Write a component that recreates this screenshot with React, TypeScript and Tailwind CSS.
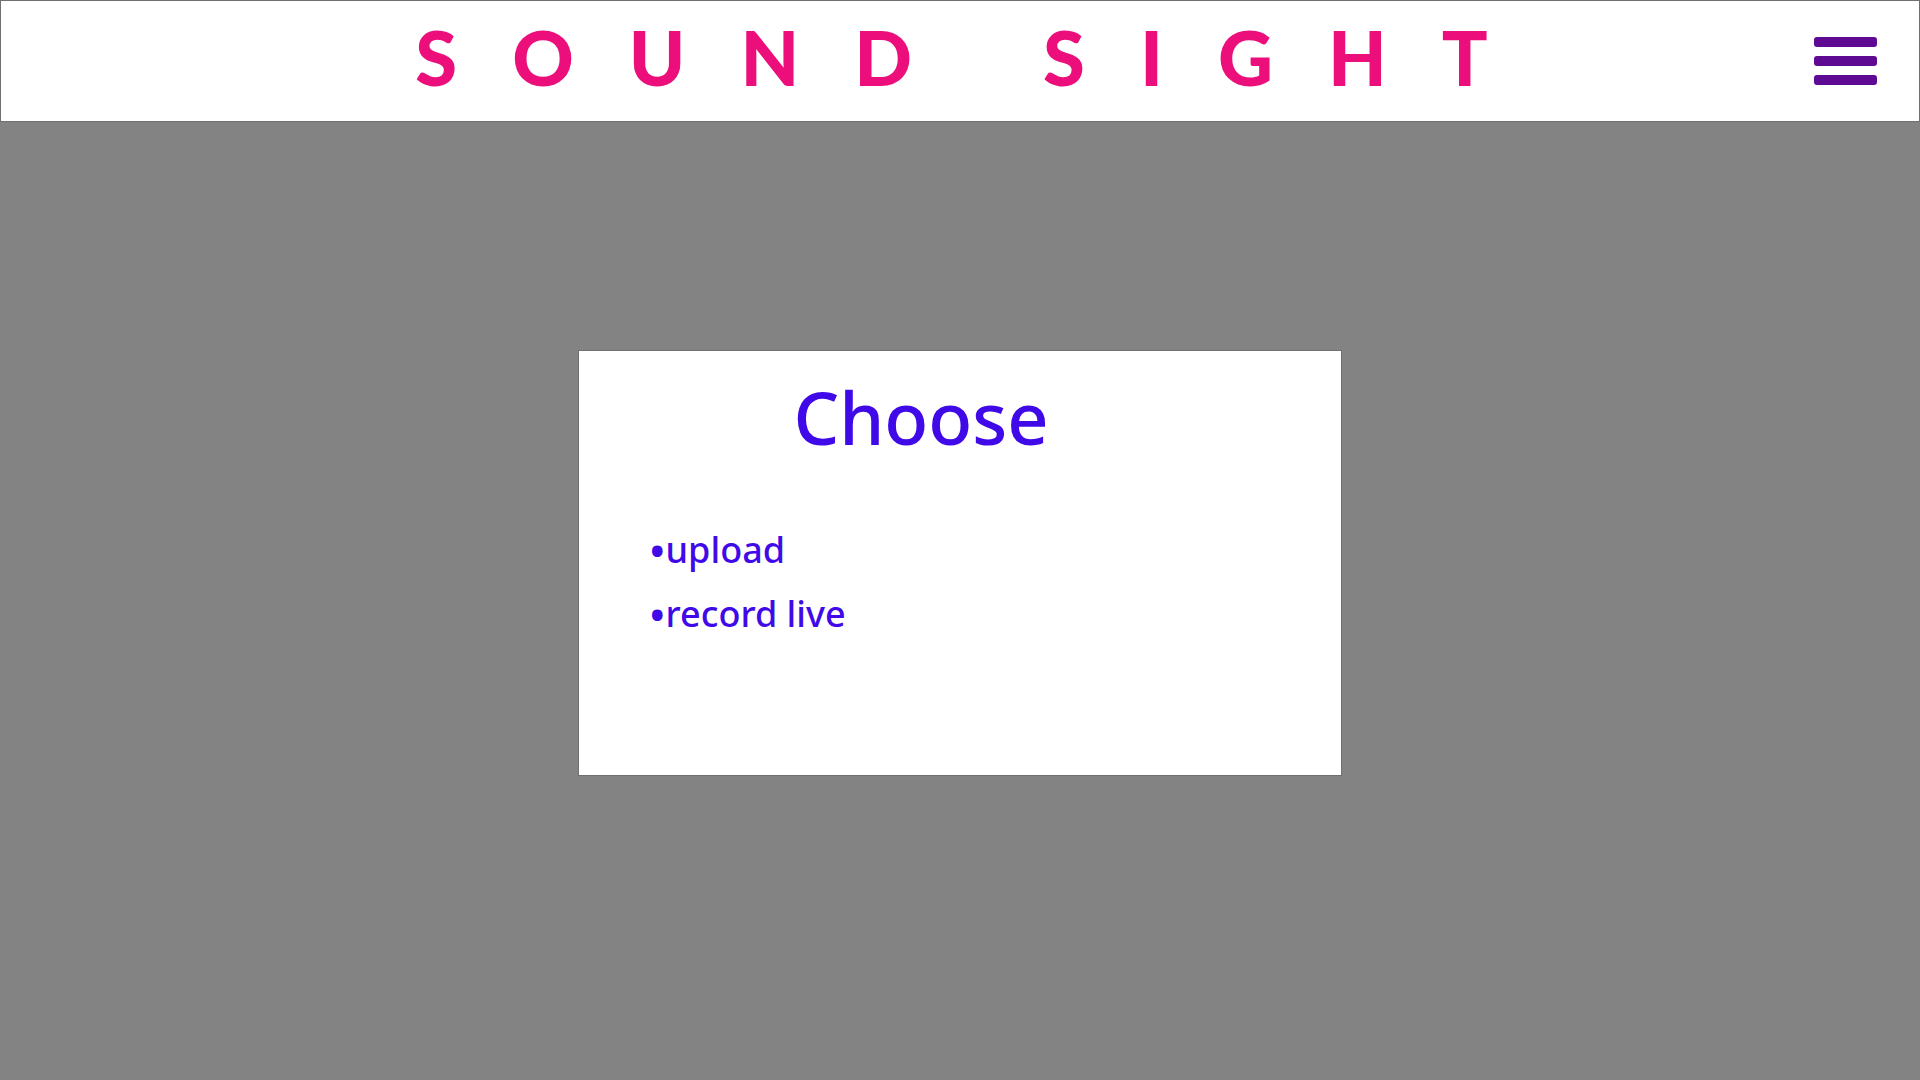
const choices = ["upload", "record live"];

function MenuButton() {
  return (
    <button
      type="button"
      aria-label="Open menu"
      className="flex w-[63px] cursor-pointer flex-col gap-[9px]"
    >
      <span className="h-[10px] w-full rounded-[3px] bg-[#5f0a93]" />
      <span className="h-[10px] w-full rounded-[3px] bg-[#5f0a93]" />
      <span className="h-[10px] w-full rounded-[3px] bg-[#5f0a93]" />
    </button>
  );
}

function Header() {
  return (
    <header className="grid grid-cols-[1fr_auto_1fr] items-center border border-[#707070] bg-white pr-[42px]">
      <div />
      <h1 className="flex gap-[76px] pt-[2px] pb-[10px] pl-[80px] font-['Lato',sans-serif] text-[76px] leading-[108px] font-black tracking-[55px] whitespace-nowrap text-[#eb0e7b]">
        <span>SOUND</span> <span>SIGHT</span>
      </h1>
      <div className="flex justify-end">
        <MenuButton />
      </div>
    </header>
  );
}

function ChoosePanel() {
  return (
    <section className="min-h-[426px] w-full max-w-[764px] border border-[#707070] bg-white px-[70px] pt-[17px] text-[#400ae8]">
      <h2 className="pr-[78px] text-center text-[72px] leading-[98px] font-medium">Choose</h2>
      <ul className="mt-[52px] text-[36px] leading-[64px] font-medium">
        {choices.map((choice) => (
          <li key={choice}>
            <button type="button" className="flex cursor-pointer">
              <span aria-hidden="true" className="text-[44px] leading-[64px]">
                •
              </span>
              <span>{choice}</span>
            </button>
          </li>
        ))}
      </ul>
    </section>
  );
}

export default function App() {
  return (
    <div className="flex min-h-screen flex-col bg-[#838383] font-['Noto_Sans',sans-serif]">
      <Header />
      <main className="flex flex-1 items-start justify-center px-6 pt-[228px]">
        <ChoosePanel />
      </main>
    </div>
  );
}
